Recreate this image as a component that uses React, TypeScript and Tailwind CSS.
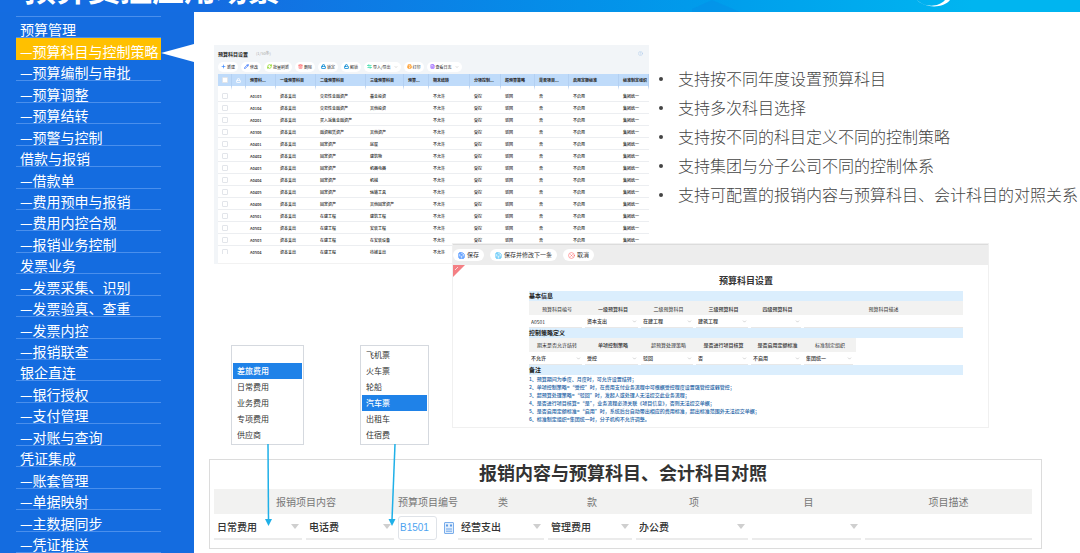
import type { ReactNode } from 'react'
import {
  ArrowLeftRight,
  ChevronDown,
  CircleHelp,
  CircleX,
  FileText,
  Lock,
  LockOpen,
  Pencil,
  Plus,
  Printer,
  RefreshCw,
  Save,
  Trash2,
} from 'lucide-react'

const NAV = [
  '预算管理',
  '—预算科目与控制策略',
  '—预算编制与审批',
  '—预算调整',
  '—预算结转',
  '—预警与控制',
  '借款与报销',
  '—借款单',
  '—费用预申与报销',
  '—费用内控合规',
  '—报销业务控制',
  '发票业务',
  '—发票采集、识别',
  '—发票验真、查重',
  '—发票内控',
  '—报销联查',
  '银企直连',
  '—银行授权',
  '—支付管理',
  '—对账与查询',
  '凭证集成',
  '—账套管理',
  '—单据映射',
  '—主数据同步',
  '—凭证推送',
]
const ACTIVE = 1

const POINTS = [
  '支持按不同年度设置预算科目',
  '支持多次科目选择',
  '支持按不同的科目定义不同的控制策略',
  '支持集团与分子公司不同的控制体系',
  '支持可配置的报销内容与预算科目、会计科目的对照关系',
]

const TOOLS: { label: string; icon: ReactNode; menu?: boolean }[] = [
  { label: '新建', icon: <Plus size={5} className="text-blue-500" strokeWidth={3} /> },
  { label: '修改', icon: <Pencil size={5} className="text-blue-600" strokeWidth={3} /> },
  { label: '批量刷新', icon: <RefreshCw size={5} className="text-lime-500" strokeWidth={3} /> },
  { label: '删除', icon: <Trash2 size={5} className="text-red-400" strokeWidth={3} /> },
  { label: '锁定', icon: <Lock size={5} className="text-sky-600" strokeWidth={4} /> },
  { label: '解锁', icon: <LockOpen size={5} className="text-sky-600" strokeWidth={4} /> },
  { label: '导入/导出', icon: <ArrowLeftRight size={5} className="text-emerald-400" strokeWidth={3} />, menu: true },
  { label: '打印', icon: <Printer size={5} className="text-orange-400" strokeWidth={3} /> },
  { label: '查看日志', icon: <FileText size={5} className="text-violet-500" strokeWidth={3} />, menu: true },
]

const HEADS = [
  '预算科...',
  '一级预算科目',
  '二级预算科目',
  '三级预算科目',
  '预算...',
  '期末结转',
  '分项控制...',
  '超预算策略',
  '是否项目...',
  '启用定额标准',
  '标准制定组织',
]

const ROWS = [
  ['A0103', '交易性金融资产', '基金投资'],
  ['A0104', '交易性金融资产', '其他投资'],
  ['A0201', '买入返售金融资产', ''],
  ['A0306', '融资租赁资产', '其他资产'],
  ['A0401', '固定资产', '房屋'],
  ['A0402', '固定资产', '建筑物'],
  ['A0403', '固定资产', '机器电器'],
  ['A0404', '固定资产', '机械'],
  ['A0405', '固定资产', '运输工具'],
  ['A0406', '固定资产', '其他固定资产'],
  ['A0501', '在建工程', '建筑工程'],
  ['A0502', '在建工程', '安装工程'],
  ['A0503', '在建工程', '在安装设备'],
  ['A0504', '在建工程', '待摊支出'],
]

const NOTES = [
  '1、预算期间为季度、月度时，可允许设置结转；',
  '2、单项控制策略=“受控”时，在费用支付业务流程中可根据受控程度设置强管控或弱管控；',
  '3、超预算处理策略=“驳回”时，发起人或处理人无法提交此业务流程；',
  '4、是否进行项目核算=“是”，业务流程必须关联《项目信息》，否则无法提交单据；',
  '5、是否启用定额标准=“启用”时，系统后台自动带出相应的费用标准，超出标准范围外无法提交单据；',
  '6、标准制定组织=集团统一时，分子机构不允许调整。',
]

function Header() {
  return (
    <header className="relative flex h-3 shrink-0 items-end overflow-hidden bg-linear-to-r from-[#146ce1] from-20% to-[#00b5f0] to-90%">
      <h1 className="mb-[7px] ml-6 text-[32px] leading-9 font-bold whitespace-nowrap text-white">预算费控应用场景</h1>
      <svg className="absolute top-0 left-[690px] h-3 w-14" viewBox="0 0 56 12">
        <path d="M2 12V9L22 0l28 12z" fill="#0a86e6" opacity="0.35" />
      </svg>
      <svg className="absolute top-0 left-[916px] h-3 w-10" viewBox="0 0 40 12">
        <path d="M1 0c5 6 20 9 28 0l5 0c-6 8-24 9-33 0z" fill="#fff" />
      </svg>
    </header>
  )
}

function Sidebar() {
  return (
    <nav className="flex w-[194px] shrink-0 flex-col bg-[#146ce0] pt-1 pr-[33px] pl-4">
      <ul className="grid flex-1 auto-rows-fr border-t border-[#4a8fec]">
        {NAV.map((item, i) => (
          <li
            key={item}
            className={
              i === ACTIVE
                ? 'relative flex min-h-0 items-end border-b border-[#ffc000] bg-[#ffc000]'
                : 'flex min-h-0 items-end border-b border-[#4a8fec]'
            }
          >
            <a href="#" className="pl-1 text-sm leading-4 whitespace-nowrap text-white">
              {item}
            </a>
            {i === ACTIVE && (
              <svg className="absolute top-1.5 left-full h-[18px] w-[33px]" viewBox="0 0 33 18">
                <path d="M33 0L0 9l33 9z" fill="#fff" />
              </svg>
            )}
          </li>
        ))}
      </ul>
    </nav>
  )
}

function Tick({ label }: { label: string }) {
  return (
    <input
      type="checkbox"
      aria-label={label}
      className="block size-[6px] appearance-none rounded-[1px] border border-[#e2e5ea] bg-white"
    />
  )
}

function SubjectTable() {
  return (
    <div className="w-[435px] shrink-0 bg-[#f2f5f8] pl-1 text-[4px] leading-none text-[#222]">
      <div className="flex h-4 items-center gap-2 pr-1.5">
        <h2 className="text-[5px] font-bold">预算科目设置</h2>
        <span className="text-[#aaa]">(1/50条)</span>
        <CircleHelp size={5} className="ml-auto text-[#a9c8ea]" />
      </div>
      <div className="flex h-[13px] items-center gap-[3px] pb-[2px]">
        {TOOLS.map((t) => (
          <button key={t.label} type="button" className="flex h-[10px] items-center gap-px rounded-full bg-white px-[3px] whitespace-nowrap">
            {t.icon}
            <span>{t.label}</span>
            {t.menu && <ChevronDown size={4} className="ml-[2px] text-[#999]" />}
          </button>
        ))}
      </div>
      <div className="h-[180px] overflow-hidden bg-white">
        <table className="w-full table-fixed border-separate border-spacing-0">
          <colgroup>
            <col className="w-[14px]" />
            <col className="w-[14px]" />
            <col className="w-[30px]" />
            <col className="w-[40px]" />
            <col className="w-[50px]" />
            <col className="w-[38px]" />
            <col className="w-[25px]" />
            <col className="w-[41px]" />
            <col className="w-[31px]" />
            <col className="w-[34px]" />
            <col className="w-[34px]" />
            <col className="w-[50px]" />
            <col />
          </colgroup>
          <thead>
            <tr className="h-4 [&>th]:border-r [&>th]:border-b-4 [&>th]:border-r-[#b3d0f2] [&>th]:border-b-white [&>th]:bg-[#bfdbfa] [&>th]:bg-clip-padding">
              <th className="pl-1">
                <Tick label="全选" />
              </th>
              <th className="pl-1">
                <Lock size={5} className="text-white" strokeWidth={4} />
              </th>
              {HEADS.map((h) => (
                <th key={h} className="overflow-hidden pl-1 text-left font-bold whitespace-nowrap">
                  {h}
                </th>
              ))}
            </tr>
          </thead>
          <tbody>
            {ROWS.map(([code, second, third]) => (
              <tr
                key={code}
                className="h-3 [&>td]:overflow-hidden [&>td]:border-b [&>td]:border-[#eceef1] [&>td]:pl-1 [&>td]:font-medium [&>td]:whitespace-nowrap"
              >
                <td>
                  <Tick label={code} />
                </td>
                <td />
                <td>{code}</td>
                <td>资本支出</td>
                <td>{second}</td>
                <td>{third}</td>
                <td />
                <td>不允许</td>
                <td>受控</td>
                <td>驳回</td>
                <td>否</td>
                <td>不启用</td>
                <td>集团统一</td>
              </tr>
            ))}
          </tbody>
        </table>
      </div>
      <div className="h-[10px] border-b border-[#f2f2f2] bg-white" />
    </div>
  )
}

function Points() {
  return (
    <ul className="min-w-0 flex-1 pt-[19px] pl-[10px] text-base leading-[29px] font-light text-[#444]">
      {POINTS.map((p) => (
        <li key={p} className="flex items-center gap-[15px] whitespace-nowrap">
          <span className="size-1 shrink-0 rounded-full bg-[#444]" />
          {p}
        </li>
      ))}
    </ul>
  )
}

function OptionList({ label, items, active, children }: { label: string; items: string[]; active: number; children: ReactNode }) {
  return (
    <div className="relative mt-[102px] h-[100px] shrink-0 border border-[#d5d9df] bg-white">
      <ul role="listbox" aria-label={label} className="py-px text-[8px] leading-4 text-[#333]">
        {items.map((item, i) => (
          <li
            key={i}
            role="option"
            aria-selected={i === active}
            className={i === active ? 'mx-px h-4 bg-[#1f82e8] pl-1 font-medium text-white' : 'mx-px h-4 pl-1'}
          >
            {item}
          </li>
        ))}
      </ul>
      {children}
    </div>
  )
}

function MiniSelect({ label, value }: { label: string; value: string }) {
  return (
    <div className="mr-[3px] flex h-[13px] items-center border-b border-[#e8e8e8]">
      <select aria-label={label} className="h-3 min-w-0 flex-1 appearance-none pl-[2px] leading-3 font-medium">
        <option>{value}</option>
      </select>
      <ChevronDown size={5} className="mr-px shrink-0 text-[#999]" />
    </div>
  )
}

const FORM_GRID = 'grid grid-cols-[56px_56px_55px_55px_53px_52px_1fr]'

function Band({ children }: { children: ReactNode }) {
  return <h4 className="h-[10px] bg-[#dbeefd] text-[6px] leading-[10px] font-bold text-[#222]">{children}</h4>
}

function SubjectForm() {
  return (
    <div className="z-10 ml-[23px] h-[185px] min-w-0 flex-1 border border-[#f0f0f0] bg-white text-[5px] leading-none text-[#333]">
      <div className="flex h-[21px] items-center gap-[6px] border-t border-[#dcdcdc] bg-[#ededed] text-[6px] [&>button]:flex [&>button]:h-3 [&>button]:items-center [&>button]:gap-[2px] [&>button]:rounded-full [&>button]:bg-white [&>button]:px-[5px]">
        <button type="button">
          <Save size={7} className="text-blue-500" strokeWidth={3} />
          保存
        </button>
        <button type="button">
          <Save size={7} className="text-sky-500" strokeWidth={2} />
          保存并修改下一条
        </button>
        <button type="button">
          <CircleX size={7} className="text-red-400" />
          取消
        </button>
      </div>
      <div className="relative pt-[10px] pr-[25px] pl-[76px]">
        <svg className="absolute top-0 left-0 size-3" viewBox="0 0 12 12">
          <path d="M0 0h12L0 12z" fill="#f47f84" />
          <path d="M2 5l3-3" stroke="#fff" strokeWidth="1" opacity="0.7" />
        </svg>
        <h3 className="mb-1 text-center text-[9px] leading-3 font-bold">预算科目设置</h3>
        <Band>基本信息</Band>
        <div className={`${FORM_GRID} h-[14px] items-center bg-[#f2f2f1] text-center`}>
          <span>预算科目编号</span>
          <span className="font-medium">一级预算科目</span>
          <span>二级预算科目</span>
          <span className="font-medium">三级预算科目</span>
          <span className="font-medium">四级预算科目</span>
          <span className="col-span-2">预算科目描述</span>
        </div>
        <div className={FORM_GRID}>
          <input aria-label="预算科目编号" defaultValue="A0501" className="mr-[3px] h-[13px] min-w-0 border-b border-[#e8e8e8] pl-[2px]" />
          <MiniSelect label="一级预算科目" value="资本支出" />
          <MiniSelect label="二级预算科目" value="在建工程" />
          <MiniSelect label="三级预算科目" value="建筑工程" />
          <MiniSelect label="四级预算科目" value="" />
          <input aria-label="预算科目描述" className="col-span-2 h-[13px] min-w-0 border-b border-[#e8e8e8]" />
        </div>
        <Band>控制策略定义</Band>
        <div className={`${FORM_GRID} h-[14px] text-center leading-[14px] [&>span]:bg-[#f2f2f1]`}>
          <span>期末是否允许结转</span>
          <span className="font-medium">单项控制策略</span>
          <span>超预算处理策略</span>
          <span className="font-medium">是否进行项目核算</span>
          <span className="font-medium">是否启用定额标准</span>
          <span>标准制定组织</span>
        </div>
        <div className={FORM_GRID}>
          <MiniSelect label="期末是否允许结转" value="不允许" />
          <MiniSelect label="单项控制策略" value="受控" />
          <MiniSelect label="超预算处理策略" value="驳回" />
          <MiniSelect label="是否进行项目核算" value="否" />
          <MiniSelect label="是否启用定额标准" value="不启用" />
          <MiniSelect label="标准制定组织" value="集团统一" />
        </div>
        <Band>备注</Band>
        <div className="leading-[8px] font-medium whitespace-nowrap text-[#2463a6]">
          {NOTES.map((n) => (
            <p key={n}>{n}</p>
          ))}
        </div>
      </div>
    </div>
  )
}

function Field({ label, value }: { label: string; value: string }) {
  return (
    <td className="pr-1">
      <div className="flex h-6 items-center border-b-2 border-[#ebebeb]">
        <select aria-label={label} className="min-w-0 flex-1 appearance-none pl-[3px] font-medium">
          <option>{value}</option>
        </select>
        <svg className="mr-[3px] h-[5px] w-2 shrink-0" viewBox="0 0 8 5">
          <path d="M0 0h8L4 5z" fill="#cfcfcf" />
        </svg>
      </div>
    </td>
  )
}

function MappingPanel() {
  return (
    <div className="mt-[14px] mr-[38px] ml-[15px] h-[90px] border border-[#dcdcdc] bg-white pr-[9px] pl-1 text-[#333]">
      <h2 className="pb-1 text-center text-lg leading-[25px] font-bold">报销内容与预算科目、会计科目对照</h2>
      <table className="w-full table-fixed text-[10px] leading-none">
        <colgroup>
          <col className="w-[92px]" />
          <col className="w-[92px]" />
          <col className="w-[60px]" />
          <col className="w-[90px]" />
          <col className="w-[88px]" />
          <col className="w-[116px]" />
          <col className="w-[113px]" />
          <col />
        </colgroup>
        <thead>
          <tr className="h-[25px] bg-[#f2f2f1] text-[#777] [&>th]:font-normal [&>th]:whitespace-nowrap">
            <th colSpan={2}>报销项目内容</th>
            <th>预算项目编号</th>
            <th>类</th>
            <th>款</th>
            <th>项</th>
            <th>目</th>
            <th>项目描述</th>
          </tr>
        </thead>
        <tbody>
          <tr className="h-[27px]">
            <Field label="报销项目大类" value="日常费用" />
            <Field label="报销项目内容" value="电话费" />
            <td>
              <div className="flex items-center gap-[7px]">
                <input
                  aria-label="预算项目编号"
                  defaultValue="B1501"
                  className="h-6 w-[39px] rounded-[3px] border border-[#dfe3e8] pl-px font-['Liberation_Sans',sans-serif] text-[#4da3f0]"
                />
                <button type="button" aria-label="选择">
                  <svg className="h-3 w-[10px]" viewBox="0 0 10 12">
                    <rect x="0.5" y="0.5" width="9" height="11" rx="0.5" fill="#e3effc" stroke="#5d9be6" strokeWidth="0.8" />
                    <path d="M2 2.500h2v2H2zM6 2.500h2v2H6z" fill="#5d9be6" />
                    <path d="M2 7h6M2 9.200h6" stroke="#5d9be6" strokeWidth="0.9" />
                  </svg>
                </button>
              </div>
            </td>
            <Field label="类" value="经营支出" />
            <Field label="款" value="管理费用" />
            <Field label="项" value="办公费" />
            <Field label="目" value="" />
            <td>
              <input aria-label="项目描述" className="block h-6 w-full border-b-2 border-[#ebebeb]" />
            </td>
          </tr>
        </tbody>
      </table>
    </div>
  )
}

export default function App() {
  return (
    <div className="flex h-screen flex-col overflow-hidden bg-white font-['Noto_Sans_CJK_SC',sans-serif]">
      <Header />
      <div className="flex min-h-0 flex-1">
        <Sidebar />
        <main className="min-w-0 flex-1 pt-[33px]">
          <div className="flex pl-5">
            <SubjectTable />
            <Points />
          </div>
          <div className="relative -mt-[21px] flex items-start pr-[91px] pl-[37px]">
            <OptionList label="费用大类" active={1} items={['', '差旅费用', '日常费用', '业务费用', '专项费用', '供应商']}>
              <svg className="absolute top-full left-[31px] h-[82px] w-3" viewBox="0 0 12 82">
                <path d="M5 0L5.500 76" stroke="#1fb0e8" strokeWidth="1.500" />
                <path d="M2 75h7L5.500 82z" fill="#1fb0e8" />
              </svg>
              <div className="w-[71px]" />
            </OptionList>
            <div className="ml-[56px]">
              <OptionList label="费用明细" active={3} items={['飞机票', '火车票', '轮船', '汽车票', '出租车', '住宿费']}>
                <svg className="absolute top-full left-[27px] h-[82px] w-3" viewBox="0 0 12 82">
                  <path d="M7 0L4 76" stroke="#1fb0e8" strokeWidth="1.500" />
                  <path d="M.500 75h7L4 82z" fill="#1fb0e8" />
                </svg>
                <div className="w-[67px]" />
              </OptionList>
            </div>
            <SubjectForm />
          </div>
          <MappingPanel />
        </main>
      </div>
    </div>
  )
}
